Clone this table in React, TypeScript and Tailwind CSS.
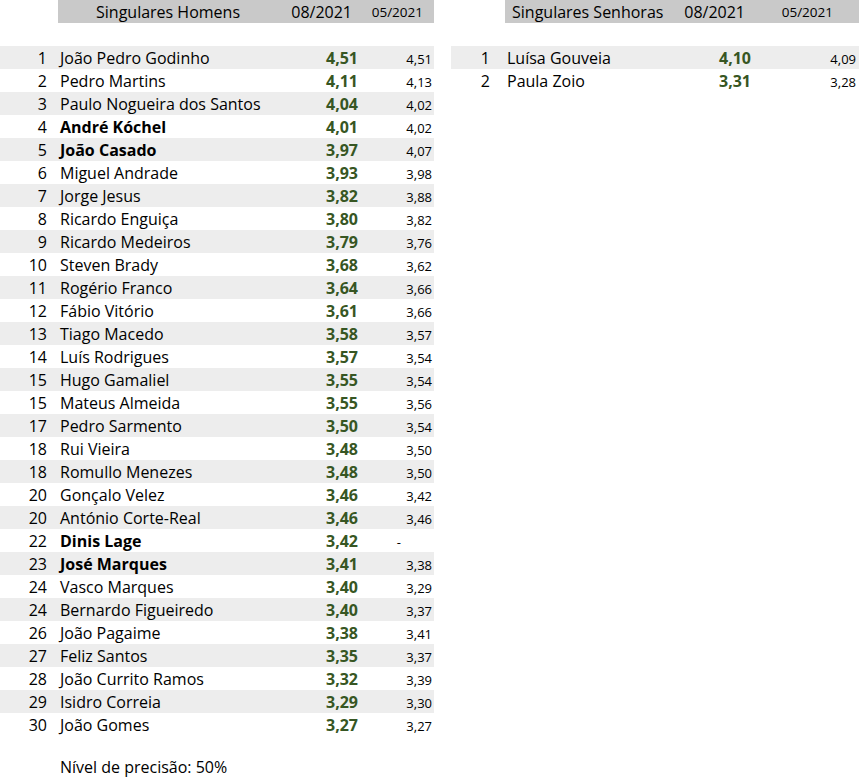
const homens: [string, string, string, string, boolean][] = [
  ["1", "João Pedro Godinho", "4,51", "4,51", false],
  ["2", "Pedro Martins", "4,11", "4,13", false],
  ["3", "Paulo Nogueira dos Santos", "4,04", "4,02", false],
  ["4", "André Kóchel", "4,01", "4,02", true],
  ["5", "João Casado", "3,97", "4,07", true],
  ["6", "Miguel Andrade", "3,93", "3,98", false],
  ["7", "Jorge Jesus", "3,82", "3,88", false],
  ["8", "Ricardo Enguiça", "3,80", "3,82", false],
  ["9", "Ricardo Medeiros", "3,79", "3,76", false],
  ["10", "Steven Brady", "3,68", "3,62", false],
  ["11", "Rogério Franco", "3,64", "3,66", false],
  ["12", "Fábio Vitório", "3,61", "3,66", false],
  ["13", "Tiago Macedo", "3,58", "3,57", false],
  ["14", "Luís Rodrigues", "3,57", "3,54", false],
  ["15", "Hugo Gamaliel", "3,55", "3,54", false],
  ["15", "Mateus Almeida", "3,55", "3,56", false],
  ["17", "Pedro Sarmento", "3,50", "3,54", false],
  ["18", "Rui Vieira", "3,48", "3,50", false],
  ["18", "Romullo Menezes", "3,48", "3,50", false],
  ["20", "Gonçalo Velez", "3,46", "3,42", false],
  ["20", "António Corte-Real", "3,46", "3,46", false],
  ["22", "Dinis Lage", "3,42", "-", true],
  ["23", "José Marques", "3,41", "3,38", true],
  ["24", "Vasco Marques", "3,40", "3,29", false],
  ["24", "Bernardo Figueiredo", "3,40", "3,37", false],
  ["26", "João Pagaime", "3,38", "3,41", false],
  ["27", "Feliz Santos", "3,35", "3,37", false],
  ["28", "João Currito Ramos", "3,32", "3,39", false],
  ["29", "Isidro Correia", "3,29", "3,30", false],
  ["30", "João Gomes", "3,27", "3,27", false],
];

const senhoras: [string, string, string, string][] = [
  ["1", "Luísa Gouveia", "4,10", "4,09"],
  ["2", "Paula Zoio", "3,31", "3,28"],
];

const App = () => {
  return (
    <div className="w-[863px] h-[781px] bg-white text-black font-['Open_Sans',sans-serif] text-[16px] leading-none flex gap-[17px]">
      {/* Singulares Homens */}
      <div className="w-[434px] flex flex-col">
        <div className="ml-[58px] h-[23px] bg-[#c9c9c9] flex items-center whitespace-nowrap">
          <span className="pl-[38px] flex-1">Singulares Homens</span>
          <span className="w-[90px] text-right">08/2021</span>
          <span className="w-[71px] text-right text-[13.5px] mt-[3px]">05/2021</span>
          <span className="w-[11px]" />
        </div>
        <div className="h-[23px]" />
        {homens.map(([pos, name, val, prev, bold], i) => (
          <div
            key={i}
            className={`h-[23px] flex items-center whitespace-nowrap ${i % 2 === 0 ? "bg-[#ededed]" : "bg-white"}`}
          >
            <span className="w-[47px] text-right">{pos}</span>
            <span className={`pl-[13px] w-[250px] ${bold ? "font-bold" : ""}`}>{name}</span>
            <span className="w-[61px] text-right font-bold text-[#375623]">{val}</span>
            <span className={`flex-1 pr-[2px] text-right text-[13px] mt-[3px] ${prev === "-" ? "pr-[33px]" : ""}`}>{prev}</span>
          </div>
        ))}
        <div className="h-[19px]" />
        <div className="h-[23px] flex items-center pl-[60px]">Nível de precisão: 50%</div>
      </div>

      {/* Singulares Senhoras */}
      <div className="w-[408px] flex flex-col">
        <div className="ml-[54px] h-[23px] bg-[#c9c9c9] flex items-center whitespace-nowrap">
          <span className="pl-[7px] flex-1">Singulares Senhoras</span>
          <span className="w-[80px] text-right">08/2021</span>
          <span className="w-[88px] text-right text-[13.5px] mt-[3px]">05/2021</span>
          <span className="w-[26px]" />
        </div>
        <div className="h-[23px]" />
        {senhoras.map(([pos, name, val, prev], i) => (
          <div
            key={i}
            className={`h-[23px] flex items-center whitespace-nowrap ${i % 2 === 0 ? "bg-[#ededed]" : "bg-white"}`}
          >
            <span className="w-[39px] text-right">{pos}</span>
            <span className="pl-[17px] w-[200px]">{name}</span>
            <span className="w-[61px] text-right font-bold text-[#375623]">{val}</span>
            <span className="flex-1 pr-[3px] text-right text-[13px] mt-[3px]">{prev}</span>
          </div>
        ))}
      </div>
    </div>
  );
};

export default App;
